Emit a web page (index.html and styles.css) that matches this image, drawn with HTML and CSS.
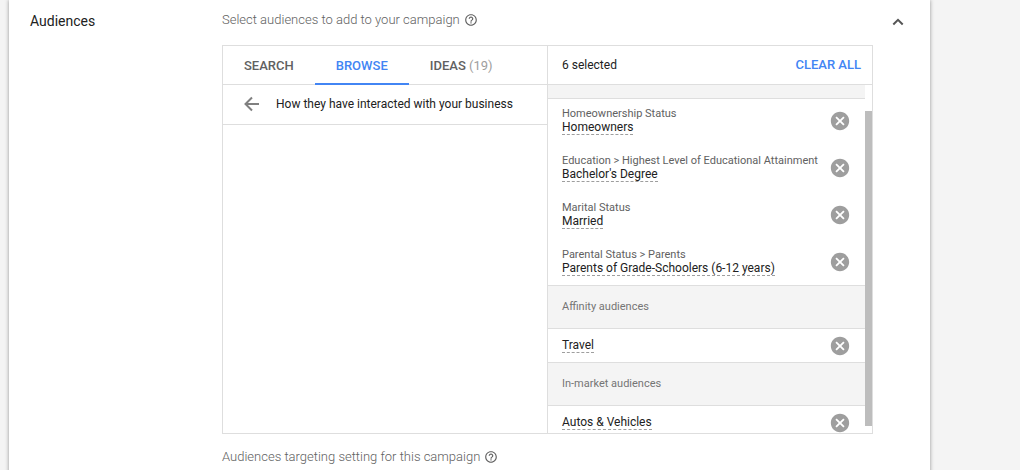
FILE: index.html
```html
<!DOCTYPE html>
<html lang="en">
<head>
<meta charset="utf-8">
<title>Audiences</title>
<link rel="stylesheet" href="styles.css">
</head>
<body>
<svg class="sprite" aria-hidden="true">
  <symbol id="help" viewBox="0 0 24 24"><path d="M11 18h2v-2h-2v2zm1-16C6.480 2 2 6.480 2 12s4.480 10 10 10 10-4.480 10-10S17.520 2 12 2zm0 18c-4.410 0-8-3.590-8-8s3.590-8 8-8 8 3.590 8 8-3.590 8-8 8zm0-14c-2.210 0-4 1.790-4 4h2c0-1.100.9-2 2-2s2 .9 2 2c0 2-3 1.750-3 5h2c0-2.250 3-2.500 3-5 0-2.210-1.790-4-4-4z"/></symbol>
  <symbol id="remove" viewBox="0 0 24 24"><path d="M12 2C6.470 2 2 6.470 2 12s4.470 10 10 10 10-4.470 10-10S17.530 2 12 2zm5 13.590L15.590 17 12 13.410 8.410 17 7 15.590 10.590 12 7 8.410 8.410 7 12 10.590 15.590 7 17 8.410 13.410 12 17 15.590z"/></symbol>
</svg>
<main class="card">
  <h2 class="card-title">Audiences</h2>
  <div class="card-body">
    <p class="caption">Select audiences to add to your campaign
      <button class="icon-button" aria-label="Help"><svg class="help-icon"><use href="#help"/></svg></button></p>
    <div class="picker">
      <section class="browse">
        <nav class="tabs">
          <button class="tab">SEARCH</button>
          <button class="tab tab-active">BROWSE</button>
          <button class="tab">IDEAS <span class="tab-count">(19)</span></button>
        </nav>
        <div class="crumb">
          <button class="icon-button" aria-label="Back"><svg class="back-icon" viewBox="0 0 16 16"><path d="M15 8H2M8 1.500L1.500 8L8 14.500"/></svg></button>
          <span>How they have interacted with your business</span>
        </div>
      </section>
      <section class="selected">
        <header class="selected-header">
          <span>6 selected</span>
          <button class="clear">CLEAR ALL</button>
        </header>
        <div class="selected-body">
          <div class="groups">
            <div class="group-edge"></div>
            <ul class="items items-detailed">
              <li class="item"><div class="item-text"><span class="path">Homeownership Status</span><span class="name">Homeowners</span></div><button class="icon-button" aria-label="Remove Homeowners"><svg class="remove-icon"><use href="#remove"/></svg></button></li>
              <li class="item"><div class="item-text"><span class="path">Education &gt; Highest Level of Educational Attainment</span><span class="name">Bachelor's Degree</span></div><button class="icon-button" aria-label="Remove Bachelor's Degree"><svg class="remove-icon"><use href="#remove"/></svg></button></li>
              <li class="item"><div class="item-text"><span class="path">Marital Status</span><span class="name">Married</span></div><button class="icon-button" aria-label="Remove Married"><svg class="remove-icon"><use href="#remove"/></svg></button></li>
              <li class="item"><div class="item-text"><span class="path">Parental Status &gt; Parents</span><span class="name">Parents of Grade-Schoolers (6-12 years)</span></div><button class="icon-button" aria-label="Remove Parents of Grade-Schoolers"><svg class="remove-icon"><use href="#remove"/></svg></button></li>
            </ul>
            <h3 class="group-title">Affinity audiences</h3>
            <ul class="items">
              <li class="item"><div class="item-text"><span class="name">Travel</span></div><button class="icon-button" aria-label="Remove Travel"><svg class="remove-icon"><use href="#remove"/></svg></button></li>
            </ul>
            <h3 class="group-title">In-market audiences</h3>
            <ul class="items">
              <li class="item"><div class="item-text"><span class="name">Autos &amp; Vehicles</span></div><button class="icon-button" aria-label="Remove Autos &amp; Vehicles"><svg class="remove-icon"><use href="#remove"/></svg></button></li>
            </ul>
          </div>
          <div class="scroll-track"><div class="scroll-thumb"></div></div>
        </div>
      </section>
    </div>
    <p class="caption caption-bottom">Audiences targeting setting for this campaign
      <button class="icon-button" aria-label="Help"><svg class="help-icon"><use href="#help"/></svg></button></p>
  </div>
  <button class="icon-button collapse" aria-label="Collapse"><svg class="collapse-icon" viewBox="0 0 12 8"><path d="M1.300 6.500L6 1.800L10.700 6.500"/></svg></button>
</main>
</body>
</html>
```
FILE: styles.css
```css
* { box-sizing: border-box; }

body {
  margin: 0;
  background: #f4f4f4;
  color: #212121;
  font-family: Roboto, "Liberation Sans", sans-serif;
  font-size: 12px;
  line-height: 16px;
  overflow: hidden;
}

button {
  margin: 0;
  padding: 0;
  border: 0;
  background: none;
  color: inherit;
  font: inherit;
  cursor: pointer;
}

h2, h3, p, ul { margin: 0; padding: 0; font-weight: 400; }
ul { list-style: none; }
svg { display: block; fill: currentColor; }
.sprite { display: none; }

.card {
  display: grid;
  grid-template-columns: 213px 1fr 57px;
  align-items: start;
  min-height: 100vh;
  margin: 0 90px 0 9px;
  background: #fff;
  box-shadow: 0 0 4px rgba(0, 0, 0, 0.4);
}

.card-title {
  padding: 12px 0 0 21px;
  font-size: 14px;
  line-height: 18px;
}

.caption {
  display: flex;
  align-items: center;
  gap: 4px;
  height: 45px;
  padding-bottom: 5px;
  color: #616161;
  font-size: 13px;
  font-weight: 300;
}

.caption-bottom { padding: 0; }
.icon-button { display: flex; flex: none; }
.help-icon { width: 14px; height: 14px; }

.collapse { margin: 18px 0 0 19px; color: #555; }
.collapse-icon {
  width: 12px;
  height: 8px;
  fill: none;
  stroke: currentColor;
  stroke-width: 2;
}

.picker {
  display: grid;
  grid-template-columns: 324fr 325fr;
  height: 389px;
  border: 1px solid #dedede;
}

.tabs {
  display: flex;
  height: 39px;
  border-bottom: 1px solid #dedede;
}

.tab {
  height: 39px;
  padding: 2px 21px 0;
  border-bottom: 2px solid transparent;
  color: #616161;
  font-size: 13px;
  font-weight: 500;
}

.tab-active { border-color: #4285f4; color: #4285f4; }
.tab-count { color: #9e9e9e; font-weight: 400; }

.crumb {
  display: flex;
  align-items: center;
  gap: 16px;
  height: 40px;
  padding: 0 21px 1px;
  border-bottom: 1px solid #dedede;
}

.back-icon {
  width: 16px;
  height: 16px;
  fill: none;
  stroke: #808080;
  stroke-width: 2;
}

.selected {
  display: flex;
  flex-direction: column;
  min-width: 0;
  min-height: 0;
  border-left: 1px solid #dedede;
}

.selected-header {
  display: flex;
  flex: none;
  align-items: center;
  justify-content: space-between;
  height: 39px;
  padding: 0 11px 0 14px;
  border-bottom: 1px solid #dedede;
}

.clear { color: #4285f4; font-size: 13px; font-weight: 500; }

.selected-body { display: flex; flex: 1; min-height: 0; }
.groups { flex: 1; min-width: 0; overflow: hidden; }

.group-edge {
  height: 14px;
  border-bottom: 1px solid #dedede;
  background: #f4f4f4;
}

.group-title {
  height: 44px;
  padding: 13px 14px;
  border: solid #dedede;
  border-width: 1px 0;
  background: #f4f4f4;
  color: #757575;
  font-size: 11px;
}

.item {
  display: flex;
  align-items: center;
  justify-content: space-between;
  height: 33px;
  padding: 0 14px;
}

.items-detailed { display: grid; gap: 3px; padding-bottom: 1px; }
.items-detailed .item { height: 44px; }

.item-text {
  display: flex;
  flex-direction: column;
  align-items: flex-start;
  white-space: nowrap;
}

.path { color: #616161; font-size: 11px; line-height: 14px; }
.name { line-height: 13px; border-bottom: 1px dashed #9e9e9e; }
.remove-icon { width: 22px; height: 22px; color: #9e9e9e; }

.scroll-track { flex: none; width: 7px; padding: 26px 0 7px; }
.scroll-thumb { height: 100%; background: #bdbdbd; }
```
